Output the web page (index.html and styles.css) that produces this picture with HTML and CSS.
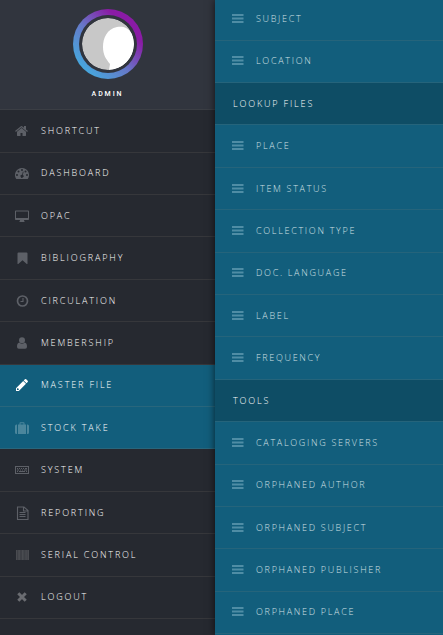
FILE: index.html
```html
<!DOCTYPE html>
<html lang="en">
<head>
<meta charset="utf-8">
<title>Admin menu</title>
<link rel="stylesheet" href="styles.css">
</head>
<body>
<svg class="defs" width="0" height="0">
  <symbol id="bars" viewBox="0 0 14 14"><path d="M1 2h11.500v2H1zM1 5.500h11.500v2H1zM1 9h11.500v2H1z"/></symbol>
</svg>
<div class="app">
  <nav class="sidebar">
    <header class="profile">
      <div class="ring"><svg class="avatar" viewBox="0 0 52 52"><circle cx="26" cy="26" r="26" fill="#c8c8c8"/><path d="M50 16C46 9 40 8 35 9C25 11 21 20 21 29C21 37 24 41 28 46L27 52A26 26 0 0 0 50 16z" fill="#fff"/></svg></div>
      <div class="name">ADMIN</div>
    </header>
    <ul class="menu">
      <li><svg viewBox="0 0 1792 1792"><path d="M1408 992v480q0 26-19 45t-45 19h-384v-384h-256v384h-384q-26 0-45-19t-19-45v-480q0-1 .5-3t.5-3l575-474 575 474q1 2 1 6zm223-69l-62 74q-8 9-21 11h-3q-13 0-21-7l-692-577-692 577q-12 8-24 7-13-2-21-11l-62-74q-8-10-7-23.5t11-21.5l719-599q32-26 76-26t76 26l244 204v-195q0-14 9-23t23-9h192q14 0 23 9t9 23v408l219 182q10 8 11 21.5t-7 23.5z"/></svg><span>SHORTCUT</span></li>
      <li><svg viewBox="0 0 14 14"><path fill-rule="evenodd" d="M7 2a7 7 0 0 0-5.900 10.700q.2.300.5.300h10.800q.3 0 .5-.3A7 7 0 0 0 7 2zM2 8a1 1 0 1 1 0 2a1 1 0 1 1 0-2zM3.500 4.500a1 1 0 1 1 0 2a1 1 0 1 1 0-2zM7 3a1 1 0 1 1 0 2a1 1 0 1 1 0-2zM10.500 4.500a1 1 0 1 1 0 2a1 1 0 1 1 0-2zM12 8a1 1 0 1 1 0 2a1 1 0 1 1 0-2zM7.900 5.600l.7.200-.8 3.100a1.500 1.500 0 1 1-.7-.2z"/></svg><span>DASHBOARD</span></li>
      <li><svg viewBox="0 0 14 14"><path fill-rule="evenodd" d="M.8 1.500h12.400q.8 0 .8.800v7.900q0 .8-.8.800H9q0 .8.500 1.200v.8h-5v-.8Q5 11.800 5 11H.8q-.8 0-.8-.8V2.300q0-.8.800-.8zM1 2.500v6.500h12V2.500z"/></svg><span>OPAC</span></li>
      <li><svg viewBox="0 0 14 14"><path d="M3.500 1.500h8q1 0 1 1v10.200q-.4.600-1 .1L7.500 9.200l-4 3.600q-.6.500-1-.1V2.500q0-1 1-1z"/></svg><span>BIBLIOGRAPHY</span></li>
      <li><svg class="outline" viewBox="0 0 14 14"><circle cx="7.500" cy="7" r="5" stroke-width="1.700"/><path d="M8 4v3.500H5.500"/></svg><span>CIRCULATION</span></li>
      <li><svg viewBox="0 0 14 14"><circle cx="7" cy="4.200" r="3"/><path d="M4.400 6.500Q7 9 9.600 6.500q2.400.5 2.400 4.300 0 2-1.800 2H3.800q-1.800 0-1.800-2 0-3.800 2.400-4.300z"/></svg><span>MEMBERSHIP</span></li>
      <li class="active"><svg class="on" viewBox="0 0 14 14"><path fill-rule="evenodd" d="M9.900 1.300q.7-.6 1.300 0l1.500 1.500q.6.700 0 1.300L11.500 5.300 8.700 2.500zM8.200 3l2.800 2.800-7.200 7.200H1v-2.800zM2 10.700v1.300h1.300l.7-.8L2.800 10z"/></svg><span>MASTER FILE</span></li>
      <li class="active"><svg viewBox="0 0 14 14"><path d="M1.500 3.500H2V13h-.5Q0 13 0 11.500V5q0-1.500 1.500-1.500zM12.500 3.500H12V13h.5q1.500 0 1.500-1.500V5q0-1.500-1.500-1.500zM3 3.500h1.500v-1.500q0-.8.800-.8h3.400q.8 0 .8.800v1.500H11V13H3zM5.500 3.500h3V2.200h-3z" fill-rule="evenodd"/></svg><span>STOCK TAKE</span></li>
      <li><svg viewBox="0 0 14 14"><path fill-rule="evenodd" d="M0 3h14v8H0zM1 4v6h12V4zM2 5h1v1H2zM4 5h1v1H4zM6 5h1v1H6zM8 5h1v1H8zM10 5h2v1h-2zM2 6.600h2v.9H2zM5 6.600h1v.9H5zM7 6.600h1v.9H7zM9 6.600h3v.9H9zM2 8h1v1H2zM4 8h6v1H4zM11 8h1v1h-1z"/></svg><span>SYSTEM</span></li>
      <li><svg class="outline" viewBox="0 0 14 14"><path d="M2.500 1h6.500l4 3.500v9H2.500zM8.500 1v4h4.500M4.500 6.500h6M4.500 8.500h6M4.500 10.500h6"/></svg><span>REPORTING</span></li>
      <li><svg class="dim" viewBox="0 0 14 14"><path d="M1 2h13v10H1z" opacity=".5"/><path d="M1 2h1v10H1zM3.200 2h1.800v10H3.200zM7 2h1.500v10H7zM10.500 2h1.200v10h-1.200zM12.700 2H14v10h-1.300z" opacity=".5"/></svg><span>SERIAL CONTROL</span></li>
      <li><svg class="cross" viewBox="0 0 14 14"><path d="M3.300 3.300l7.400 7.400M10.700 3.300l-7.400 7.400"/></svg><span>LOGOUT</span></li>
    </ul>
  </nav>
  <aside class="panel">
    <ul class="menu submenu">
      <li><svg><use href="#bars"/></svg><span>SUBJECT</span></li>
      <li><svg><use href="#bars"/></svg><span>LOCATION</span></li>
      <li class="heading">LOOKUP FILES</li>
      <li><svg><use href="#bars"/></svg><span>PLACE</span></li>
      <li><svg><use href="#bars"/></svg><span>ITEM STATUS</span></li>
      <li><svg><use href="#bars"/></svg><span>COLLECTION TYPE</span></li>
      <li><svg><use href="#bars"/></svg><span>DOC. LANGUAGE</span></li>
      <li><svg><use href="#bars"/></svg><span>LABEL</span></li>
      <li><svg><use href="#bars"/></svg><span>FREQUENCY</span></li>
      <li class="heading">TOOLS</li>
      <li><svg><use href="#bars"/></svg><span>CATALOGING SERVERS</span></li>
      <li><svg><use href="#bars"/></svg><span>ORPHANED AUTHOR</span></li>
      <li><svg><use href="#bars"/></svg><span>ORPHANED SUBJECT</span></li>
      <li><svg><use href="#bars"/></svg><span>ORPHANED PUBLISHER</span></li>
      <li><svg><use href="#bars"/></svg><span>ORPHANED PLACE</span></li>
    </ul>
  </aside>
</div>
</body>
</html>
```
FILE: styles.css
```css
* { box-sizing: border-box; }
body { margin: 0; background: #262930; font: 300 9px "Open Sans", "Noto Sans", sans-serif; letter-spacing: 1.85px; color: #fff; }
.defs { display: none; }
.app { display: grid; grid-template-columns: 215px 1fr; height: 635px; overflow: hidden; }
.sidebar { background: #262930; min-width: 0; }
.profile { height: 110.3px; padding-top: 9px; display: flex; flex-direction: column; align-items: center; background: #31353e; border-bottom: 1px solid #3b3e44; }
.ring { width: 70px; height: 70px; padding: 6px; border-radius: 50%; background: linear-gradient(45deg, #42aee0 10%, #6678c8 45%, #8a1ba5 75%, #8a1ba5); }
.avatar { display: block; width: 58px; height: 58px; padding: 3px; background: #31353e; border-radius: 50%; }
.name { margin-top: 10px; font: 500 7px/10px Roboto, sans-serif; letter-spacing: 1.9px; }
.menu { list-style: none; margin: 0; padding: 0; }
.menu li { height: 42.4px; display: flex; align-items: center; gap: 12px; padding-left: 15px; border-bottom: 1px solid #36373b; white-space: nowrap; }
.menu span { padding-bottom: 1px; }
.menu svg { width: 14px; height: 14px; flex: none; fill: #5d6067; }
.menu svg.outline { fill: none; stroke: #5d6067; stroke-width: 1.1; }
.menu svg.cross { fill: none; stroke: #6a6c71; stroke-width: 3; }
.menu svg.dim { fill: #55575b; }
.menu li.active { background: #125e7c; border-color: #28667c; }
.menu li.active svg { fill: #4b869c; }
.menu li.active svg.on { fill: #fff; }
.panel { background: #125e7c; box-shadow: 0 0 8px rgba(0, 0, 0, .65); z-index: 1; }
.submenu { margin-top: -1.7px; color: #d3e0e5; letter-spacing: 1.7px; }
.submenu li { padding-left: 16px; gap: 11px; border-color: #25647b; }
.submenu svg { fill: #4f8da5; }
.submenu .heading { background: #0e4d65; color: #fff; padding-left: 18px; letter-spacing: 1.85px; }
```
